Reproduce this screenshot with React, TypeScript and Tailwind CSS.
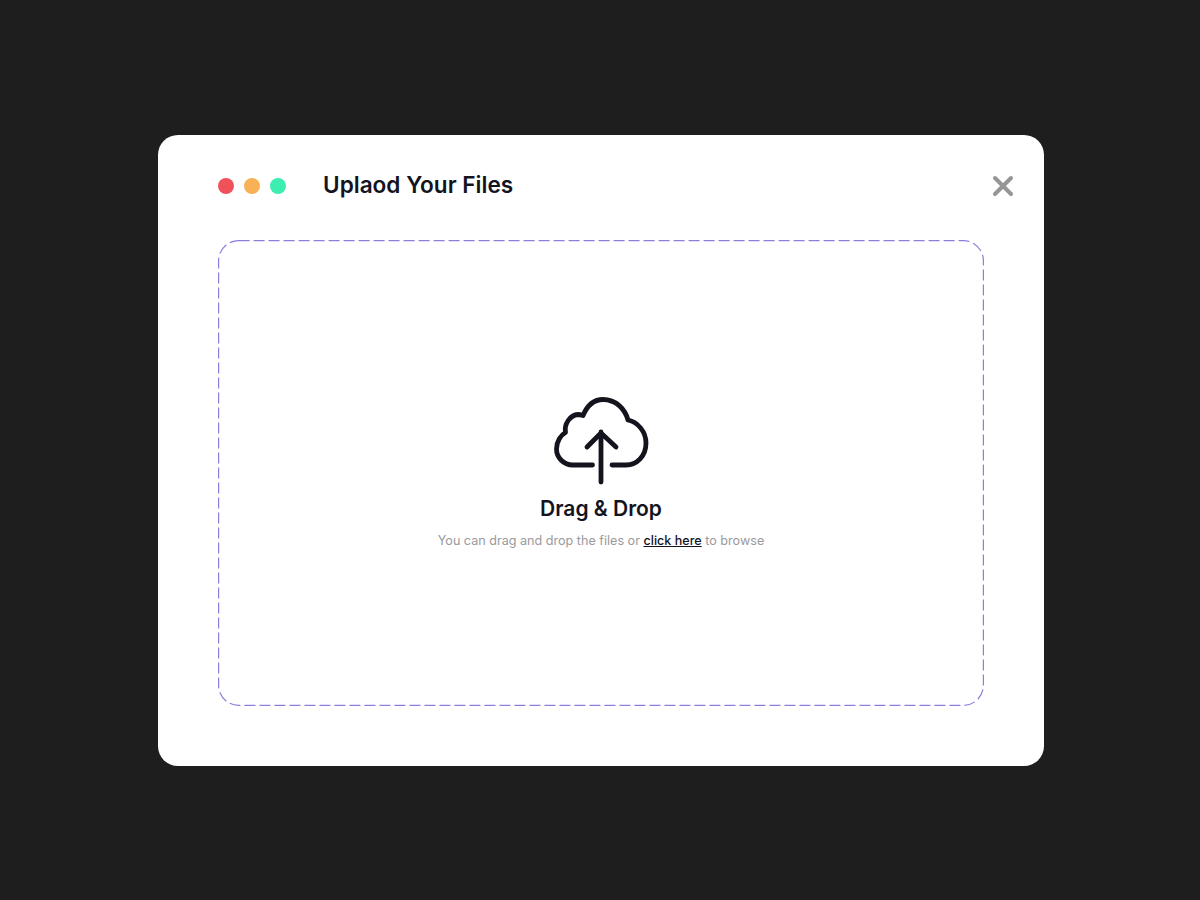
export default function App() {
  return (
    <div className="min-h-[900px] bg-[#1e1e1e] flex items-start justify-center pt-[135px] pl-[2px] font-['Inter',sans-serif]">
      <div className="w-[886px] h-[631px] bg-white rounded-[20px] px-[60px] pb-[60px] flex flex-col">
        <header className="h-[105px] pb-[4px] flex items-center">
          <div className="flex items-center gap-[10px]">
            <span className="w-[16px] h-[16px] rounded-full bg-[#f0525a]" />
            <span className="w-[16px] h-[16px] rounded-full bg-[#f9b156]" />
            <span className="w-[16px] h-[16px] rounded-full bg-[#3ceeb0]" />
          </div>
          <h1 className="ml-[37px] -mt-[2px] text-[22.6px] leading-[30px] font-semibold text-[#14141f]">Uplaod Your Files</h1>
          <button className="ml-auto -mr-[30px] w-[22px] h-[22px] flex items-center justify-center" aria-label="Close">
            <svg width="22" height="22" viewBox="0 0 22 22" fill="none">
              <path d="M3 3L19 19M19 3L3 19" stroke="#969696" strokeWidth="4" strokeLinecap="round" />
            </svg>
          </button>
        </header>
        <section className="relative flex-1 flex flex-col items-center pt-[154px]">
          <svg className="absolute inset-0 w-full h-full" fill="none">
            <rect x="0.6" y="0.6" width="764.8" height="464.8" rx="20" stroke="#8c7fdb" strokeWidth="1.2" strokeDasharray="11 4" />
          </svg>
          <svg className="ml-[2px]" width="104" height="94" viewBox="0 0 104 94" fill="none" stroke="#14141f" strokeWidth="4.8" strokeLinecap="round" strokeLinejoin="round">
            <path d="M42.5 71H23C13 71 6.5 63 6.5 55C6.5 47 11 41 15.5 38.5C14 30 20 21 28 20.5C30 20.5 31.5 21 33 21.5C37 12 44 5.5 53 5.5C66 5.5 75 15 78 26C88 28 96 38 96 49C96 62 87 71 76 71H62" />
            <path d="M51 38V88M37 53L51 39L66 53" />
          </svg>
          <h2 className="mt-[7px] text-[21px] leading-[28px] font-semibold text-[#14141f]">Drag &amp; Drop</h2>
          <p className="mt-[8px] text-[12.6px] leading-[20px] text-[#9a9a9e]">
            You can drag and drop the files or{" "}
            <a className="font-medium text-[#14141f] underline">click here</a> to browse
          </p>
        </section>
      </div>
    </div>
  );
}
